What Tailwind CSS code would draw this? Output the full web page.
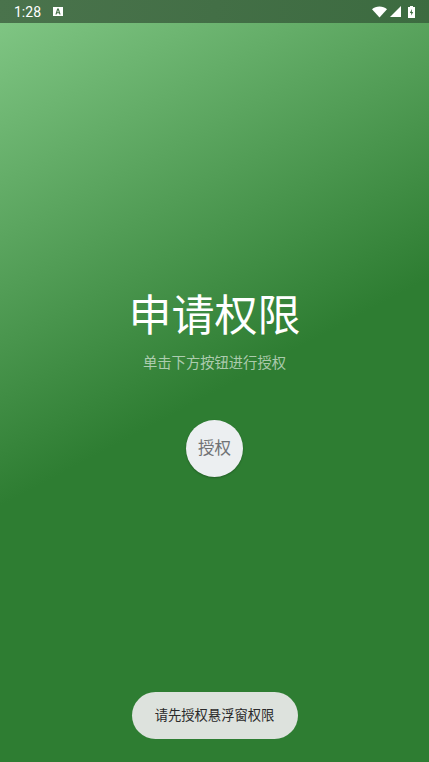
<!DOCTYPE html>
<html lang="zh">
<head>
    <meta charset="UTF-8">
    <meta name="viewport" content="width=device-width, initial-scale=1.0">
    <title>申请权限</title>
    <script src="https://cdn.jsdelivr.net/npm/@tailwindcss/browser@4"></script>
</head>
<body class="w-[429px] h-[762px] overflow-hidden font-['Roboto','Noto_Sans_CJK_SC',sans-serif]">
    <div class="relative flex flex-col h-full bg-[#2e7d32]">
        <!-- status bar -->
        <div class="flex items-center h-[23px] pl-[14px] pr-[14px] bg-[linear-gradient(100deg,#4a734c,#3c6b40)] text-white">
            <span class="text-[14px] leading-none">1:28</span>
            <svg class="ml-[12px]" width="10" height="9" viewBox="0 0 10 9"><path fill="#fff" fill-rule="evenodd" d="M0 0h10v9H0zM4.200 1.500 2.400 7.500h1.200l.4-1.300h2l.4 1.300h1.200L5.800 1.500zM5 3l.7 2.200H4.300z"/></svg>
            <div class="ml-auto flex items-center gap-[3px]">
                <svg width="15" height="12" viewBox="0 0 15 12"><path fill="#fff" d="M0 3.200C2 1.300 4.600.4 7.500.4s5.500.9 7.500 2.800L7.500 11.500z"/></svg>
                <svg width="11" height="11" viewBox="0 0 11 11"><path fill="#fff" d="M11 0v11H0z"/></svg>
                <svg class="ml-[4px]" width="7" height="12" viewBox="0 0 7 12"><path fill="#fff" fill-rule="evenodd" d="M2 0h3v1h2v11H0V1h2zM4 3 1.800 7h1.400v2.500L5.200 6H3.800z"/></svg>
            </div>
        </div>

        <!-- main -->
        <div class="flex-1 flex flex-col items-center bg-[linear-gradient(152deg,#7fc583_0%,#2e7d32_50%)]">
            <h1 class="mt-[265px] text-[43px] leading-[56px] font-normal text-white">申请权限</h1>
            <p class="mt-[9px] text-[14.300px] leading-[20px] text-white/60">单击下方按钮进行授权</p>
            <button class="mt-[47px] w-[57px] h-[57px] pt-[1px] rounded-full bg-[#eceff1] text-[#707274] text-[16.500px] shadow-[0_1px_2px_rgba(0,0,0,0.25)]">授权</button>
        </div>

        <!-- toast -->
        <div class="absolute left-[131.500px] top-[692px] w-[166px] h-[47px] pt-[1px] rounded-[24px] bg-[#dde2dd] flex items-center justify-center text-[13.300px] text-[#2a2a2a]">请先授权悬浮窗权限</div>
    </div>
</body>
</html>
